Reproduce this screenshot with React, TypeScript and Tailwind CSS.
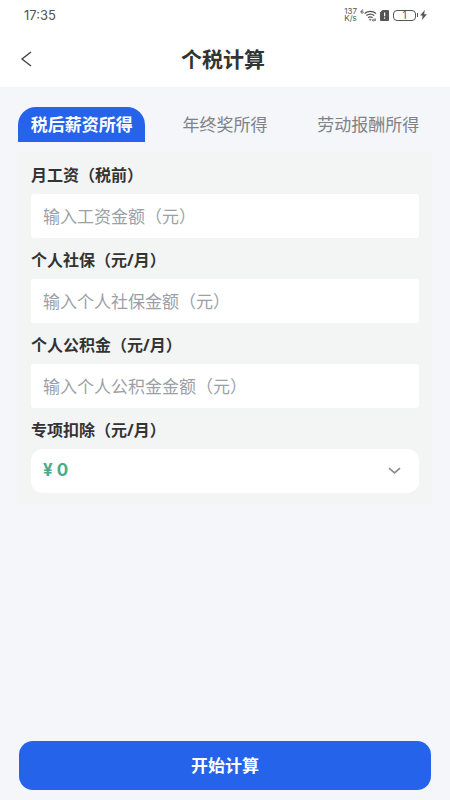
import { useState, type FormEvent } from "react";

const TABS = ["税后薪资所得", "年终奖所得", "劳动报酬所得"];

const FIELDS = [
  { id: "salary", label: "月工资（税前）", placeholder: "输入工资金额（元）" },
  { id: "social", label: "个人社保（元/月）", placeholder: "输入个人社保金额（元）" },
  { id: "fund", label: "个人公积金（元/月）", placeholder: "输入个人公积金金额（元）" },
];

const DEDUCTIONS = [0, 1000, 1500, 2000, 3000];

function StatusBar() {
  return (
    <div className="flex h-[30px] items-center justify-between pl-6 pr-[23px] font-['Inter','Noto_Sans_CJK_SC',sans-serif] text-[#555]">
      <span className="text-[13px] leading-4">17:35</span>
      <div className="flex items-center gap-[3px]">
        <span className="text-[8px] leading-[7px]">
          137
          <br />
          K/s
        </span>
        <svg width="17" height="13" viewBox="0 0 17 13" fill="none" stroke="currentColor" aria-hidden>
          <path d="M3.2 .8C1.8 1 1 1.9 1 3.1c0 .8.5 1.2 1.1 1.2s1.1-.4 1.1-1.1S2.8 2.1 2.2 2.1s-1 .3-1.1.8" strokeWidth=".9" />
          <path d="M4.6 4.4c3.3-2.6 8.2-2.6 11.4 0M6.3 6.6c2.4-1.8 5.6-1.8 8 0M8 8.7c1.4-1 3.2-1 4.6 0" strokeWidth="1.3" />
          <path d="M9 10.2h2.4l-1.2 1.4z" fill="currentColor" strokeWidth=".4" />
          <path d="M12.3 10.4h3.6M14.8 9.5l1.1.9M12.3 11.6h3.6M13.4 12.5l-1.1-.9" strokeWidth=".7" />
        </svg>
        <svg width="9" height="11" viewBox="0 0 9 11" aria-hidden>
          <path d="M2.6 0H8a1 1 0 0 1 1 1v9a1 1 0 0 1-1 1H1a1 1 0 0 1-1-1V2.6z" fill="currentColor" />
          <path d="M4.6 2.4v3.8M4.6 7.4v1.4" stroke="#fff" strokeWidth="1.2" />
        </svg>
        <span className="ml-px flex items-center gap-px">
          <span className="flex h-[11px] w-[23px] items-center justify-center rounded-[4px] border border-current text-[10px] leading-[9px]">
            1
          </span>
          <span className="mr-px h-1 w-px bg-current" />
          <svg width="7" height="10" viewBox="0 0 7 10" fill="currentColor" aria-hidden>
            <path d="M4.8 0L0 5.6h2.6L2 10l5-5.8H4.2z" />
          </svg>
        </span>
      </div>
    </div>
  );
}

export default function App() {
  const [tab, setTab] = useState(0);
  const [values, setValues] = useState<Record<string, string>>({});
  const [deduction, setDeduction] = useState(0);

  function handleSubmit(e: FormEvent<HTMLFormElement>) {
    e.preventDefault();
  }

  return (
    <div className="flex min-h-screen flex-col bg-[#f4f6fa] font-['Noto_Sans','Noto_Sans_CJK_SC',sans-serif] text-[#333]">
      <header className="bg-white">
        <StatusBar />
        <div className="grid h-[57px] grid-cols-[1fr_auto_1fr] items-center pl-5 pr-6">
          <button type="button" aria-label="返回" className="justify-self-start">
            <svg width="12" height="16" viewBox="0 0 12 16" fill="none" stroke="#444" strokeWidth="1.4" aria-hidden>
              <path d="M11 1L2 8l9 7" />
            </svg>
          </button>
          <h1 className="text-[21px] font-bold leading-7">个税计算</h1>
        </div>
      </header>

      <div role="tablist" className="mx-[18px] mt-5 grid grid-cols-3 gap-4">
        {TABS.map((name, i) => (
          <button
            key={name}
            type="button"
            role="tab"
            aria-selected={tab === i}
            onClick={() => setTab(i)}
            className={
              tab === i
                ? "h-[35px] whitespace-nowrap rounded-t-[18px] bg-[#2563eb] text-[17px] font-bold leading-6 text-white"
                : "h-[35px] whitespace-nowrap text-[17px] leading-6 text-[#808287]"
            }
          >
            {name}
          </button>
        ))}
      </div>

      <form onSubmit={handleSubmit} className="flex flex-1 flex-col">
        <div className="mx-[18px] mt-[10px] flex flex-col gap-[10px] bg-[#f3f5f5] px-[13px] py-[11px]">
          {FIELDS.map((f) => (
            <div key={f.id} className="flex flex-col gap-[7px]">
              <label htmlFor={f.id} className="text-base font-bold leading-6">
                {f.label}
              </label>
              <input
                id={f.id}
                type="text"
                inputMode="decimal"
                placeholder={f.placeholder}
                value={values[f.id] ?? ""}
                onChange={(e) => setValues({ ...values, [f.id]: e.target.value })}
                className="h-11 w-full rounded-[3px] bg-white px-3 text-[17px] outline-none placeholder:text-[#9b9fa8]"
              />
            </div>
          ))}
          <div className="flex flex-col gap-[7px]">
            <label htmlFor="deduction" className="text-base font-bold leading-6">
              专项扣除（元/月）
            </label>
            <div className="relative">
              <select
                id="deduction"
                value={deduction}
                onChange={(e) => setDeduction(Number(e.target.value))}
                className="h-11 w-full appearance-none rounded-xl bg-white px-3 font-['Inter',sans-serif] text-[17px] font-bold text-[#4cab8a] outline-none"
              >
                {DEDUCTIONS.map((d) => (
                  <option key={d} value={d}>
                    ¥ {d}
                  </option>
                ))}
              </select>
              <svg
                className="pointer-events-none absolute inset-y-0 right-[18px] my-auto"
                width="13"
                height="8"
                viewBox="0 0 13 8"
                fill="none"
                stroke="#8c8c8c"
                strokeWidth="1.7"
                aria-hidden
              >
                <path d="M1 1.2l5.5 4.6L12 1.2" />
              </svg>
            </div>
          </div>
        </div>

        <div className="mt-auto px-[19px] pb-[10px] pt-6">
          <button
            type="submit"
            className="h-[49px] w-full rounded-[14px] bg-[#2563eb] text-[17px] font-bold text-white"
          >
            开始计算
          </button>
        </div>
      </form>
    </div>
  );
}
